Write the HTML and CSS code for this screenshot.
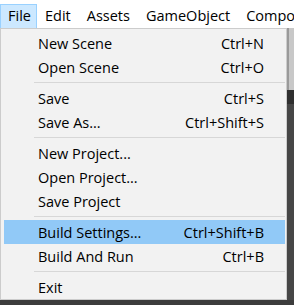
FILE: index.html
```html
<!DOCTYPE html>
<html>
<head>
<meta charset="utf-8">
<link rel="stylesheet" href="styles.css">
</head>
<body>
<div class="screen">
  <div class="menubar">
    <div class="mb-item active">File</div>
    <div class="mb-item">Edit</div>
    <div class="mb-item">Assets</div>
    <div class="mb-item">GameObject</div>
    <div class="mb-item">Component</div>
  </div>
  <div class="work">
    <div class="menu">
      <div class="item"><span class="label">New Scene</span><span class="key">Ctrl+N</span></div>
      <div class="item"><span class="label">Open Scene</span><span class="key">Ctrl+O</span></div>
      <div class="sep"></div>
      <div class="item"><span class="label">Save</span><span class="key">Ctrl+S</span></div>
      <div class="item"><span class="label">Save As...</span><span class="key">Ctrl+Shift+S</span></div>
      <div class="sep"></div>
      <div class="item"><span class="label">New Project...</span><span class="key"></span></div>
      <div class="item"><span class="label">Open Project...</span><span class="key"></span></div>
      <div class="item"><span class="label">Save Project</span><span class="key"></span></div>
      <div class="sep"></div>
      <div class="item hover"><span class="label">Build Settings...</span><span class="key">Ctrl+Shift+B</span></div>
      <div class="item"><span class="label">Build And Run</span><span class="key">Ctrl+B</span></div>
      <div class="sep"></div>
      <div class="item"><span class="label">Exit</span><span class="key"></span></div>
    </div>
    <div class="behind">
      <div class="behind-top"></div>
      <div class="behind-icon"></div>
      <div class="behind-rest"></div>
    </div>
  </div>
  <div class="bottom"></div>
</div>
</body>
</html>
```
FILE: styles.css
```css
html, body {
  margin: 0;
  padding: 0;
}
body {
  background: #3e3e3e;
  font-family: "Open Sans", "Noto Sans", sans-serif;
  color: #000;
}
.screen {
  width: 294px;
  height: 305px;
  overflow: hidden;
  display: flex;
  flex-direction: column;
}
.menubar {
  height: 28px;
  flex: none;
  background: #ffffff;
  display: flex;
  align-items: flex-end;
  white-space: nowrap;
  overflow: hidden;
}
.mb-item {
  font-size: 14.5px;
  height: 24px;
  line-height: 22px;
  padding: 0 7px;
  box-sizing: border-box;
  border: 1px solid transparent;
  border-bottom: none;
  flex: none;
}
.mb-item.active {
  background: #cce8ff;
  border-color: #99d1ff;
  padding: 0 5px 0 7px;
}
.work {
  display: flex;
  height: 272px;
  flex: none;
}
.menu {
  width: 287px;
  height: 272px;
  flex: none;
  box-sizing: border-box;
  background: #f2f2f2;
  border: 1px solid #cccccc;
  padding: 2px 1px 0 3px;
  display: flex;
  flex-direction: column;
}
.item {
  height: 24px;
  flex: none;
  display: flex;
  align-items: center;
  padding: 0 21px 0 34px;
  font-size: 14.5px;
  white-space: nowrap;
}
.item .label {
  flex: 1;
}
.item.hover {
  background: #91c9f7;
}
.sep {
  height: 1px;
  flex: none;
  background: #d7d7d7;
  margin: 3px 0 3px 30px;
}
.behind {
  flex: 1;
  display: flex;
  flex-direction: column;
  background: #4a4a4a;
}
.behind-top {
  height: 62px;
  background: #c8c8c8;
  border-left: 2px solid #9a9a9a;
}
.behind-icon {
  height: 14px;
  background: #2f2f2f;
}
.behind-rest {
  flex: 1;
  background: #464646;
}
.bottom {
  flex: 1;
  background: #3c3c3c;
}
```
